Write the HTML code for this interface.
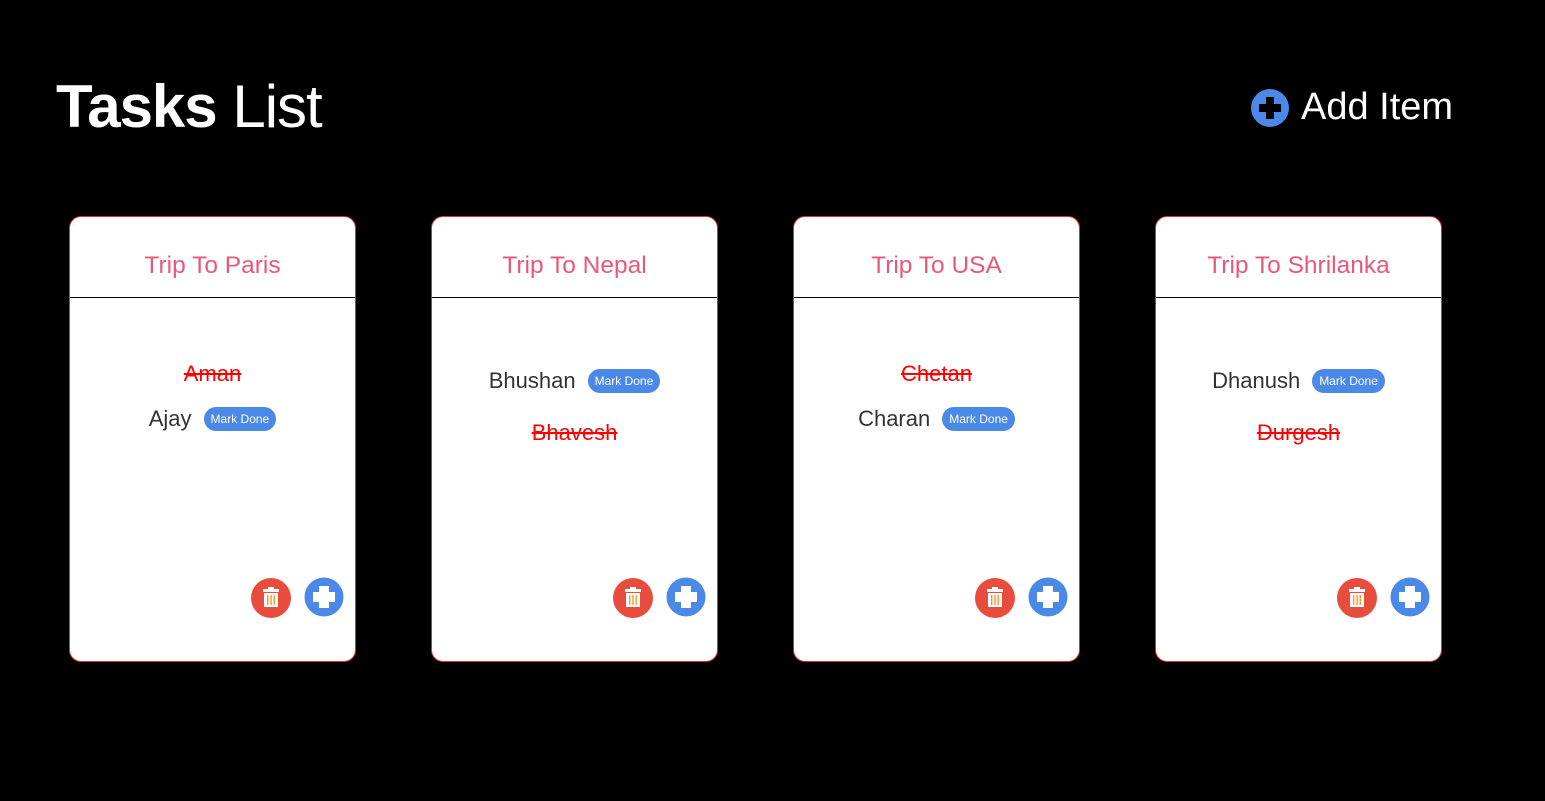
<!DOCTYPE html>
<html><head><style>
body{margin:0;width:1545px;height:801px;background:#000;font-family:"Liberation Sans",sans-serif;position:relative;overflow:hidden}
h1{position:absolute;left:56px;top:72px;margin:0;font-size:60px;color:#fff;font-weight:bold;letter-spacing:-1px}
.add{position:absolute;left:1250px;top:86px;color:#fff;font-size:38px;display:flex;align-items:center;gap:11px}
.card{position:absolute;top:216px;width:287px;height:446px;background:#fff;border:1px solid #d33;border-radius:12px;box-sizing:border-box}
.title{height:80px;border-bottom:1.5px solid #000;text-align:center;line-height:98px;font-size:24.5px;color:#e8587a}
.row{position:absolute;left:0;right:0;text-align:center;font-size:22px;color:#333}
.done{color:#f00;text-decoration:line-through}
.badge{display:inline-block;background:#4a89e8;color:#fff;font-size:12px;border-radius:12px;padding:5px 7px;margin-left:12px;vertical-align:3px}
.btns{position:absolute;left:180px;top:360px}
</style></head><body>
<h1>Tasks <span style="font-weight:normal">List</span></h1>
<div class="add"><svg width="40" height="40" viewBox="0 0 40 40"><circle cx="20" cy="20" r="19" fill="#4a89e8"/><rect x="16" y="9" width="8" height="22" fill="#000"/><rect x="9" y="16" width="22" height="8" fill="#000"/></svg><span>Add Item</span></div>

<div class="card" style="left:69px"><div class="title">Trip To Paris</div>
<div class="row done" style="top:144px">Aman</div>
<div class="row" style="top:189px">Ajay<span class="badge">Mark Done</span></div>
<div class="btns"><svg width="120" height="42"><circle cx="21" cy="21" r="20" fill="#e84c3d"/><rect x="13" y="12" width="16" height="3" fill="#fff"/><rect x="18" y="10" width="6" height="3" fill="#fff"/><rect x="14" y="16" width="14" height="14" fill="#fff"/><rect x="17" y="18" width="1.5" height="10" fill="#f0a040"/><rect x="20.3" y="18" width="1.5" height="10" fill="#f0a040"/><rect x="23.5" y="18" width="1.5" height="10" fill="#f0a040"/><circle cx="74" cy="20" r="19.5" fill="#4a89e8"/><rect x="69" y="9" width="10" height="22" fill="#fff"/><rect x="63" y="15" width="22" height="10" fill="#fff"/></svg></div></div>

<div class="card" style="left:431px"><div class="title">Trip To Nepal</div>
<div class="row" style="top:151px">Bhushan<span class="badge">Mark Done</span></div>
<div class="row done" style="top:203px">Bhavesh</div>
<div class="btns"><svg width="120" height="42"><circle cx="21" cy="21" r="20" fill="#e84c3d"/><rect x="13" y="12" width="16" height="3" fill="#fff"/><rect x="18" y="10" width="6" height="3" fill="#fff"/><rect x="14" y="16" width="14" height="14" fill="#fff"/><rect x="17" y="18" width="1.5" height="10" fill="#f0a040"/><rect x="20.3" y="18" width="1.5" height="10" fill="#f0a040"/><rect x="23.5" y="18" width="1.5" height="10" fill="#f0a040"/><circle cx="74" cy="20" r="19.5" fill="#4a89e8"/><rect x="69" y="9" width="10" height="22" fill="#fff"/><rect x="63" y="15" width="22" height="10" fill="#fff"/></svg></div></div>

<div class="card" style="left:793px"><div class="title">Trip To USA</div>
<div class="row done" style="top:144px">Chetan</div>
<div class="row" style="top:189px">Charan<span class="badge">Mark Done</span></div>
<div class="btns"><svg width="120" height="42"><circle cx="21" cy="21" r="20" fill="#e84c3d"/><rect x="13" y="12" width="16" height="3" fill="#fff"/><rect x="18" y="10" width="6" height="3" fill="#fff"/><rect x="14" y="16" width="14" height="14" fill="#fff"/><rect x="17" y="18" width="1.5" height="10" fill="#f0a040"/><rect x="20.3" y="18" width="1.5" height="10" fill="#f0a040"/><rect x="23.5" y="18" width="1.5" height="10" fill="#f0a040"/><circle cx="74" cy="20" r="19.5" fill="#4a89e8"/><rect x="69" y="9" width="10" height="22" fill="#fff"/><rect x="63" y="15" width="22" height="10" fill="#fff"/></svg></div></div>

<div class="card" style="left:1155px"><div class="title">Trip To Shrilanka</div>
<div class="row" style="top:151px">Dhanush<span class="badge">Mark Done</span></div>
<div class="row done" style="top:203px">Durgesh</div>
<div class="btns"><svg width="120" height="42"><circle cx="21" cy="21" r="20" fill="#e84c3d"/><rect x="13" y="12" width="16" height="3" fill="#fff"/><rect x="18" y="10" width="6" height="3" fill="#fff"/><rect x="14" y="16" width="14" height="14" fill="#fff"/><rect x="17" y="18" width="1.5" height="10" fill="#f0a040"/><rect x="20.3" y="18" width="1.5" height="10" fill="#f0a040"/><rect x="23.5" y="18" width="1.5" height="10" fill="#f0a040"/><circle cx="74" cy="20" r="19.5" fill="#4a89e8"/><rect x="69" y="9" width="10" height="22" fill="#fff"/><rect x="63" y="15" width="22" height="10" fill="#fff"/></svg></div></div>
</body></html>
